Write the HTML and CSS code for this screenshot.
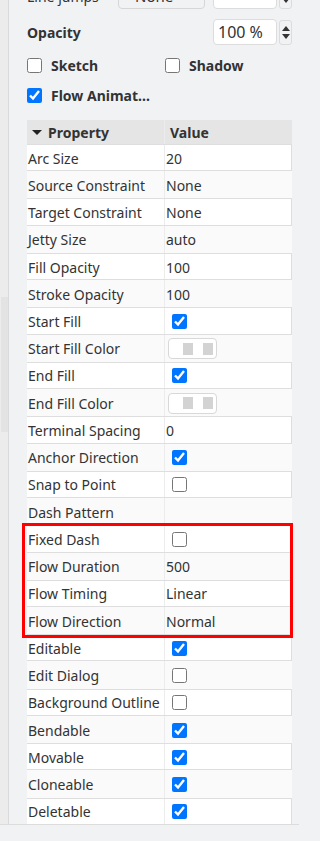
FILE: index.html
```html
<!DOCTYPE html>
<html>
<head>
<meta charset="utf-8">
<link rel="stylesheet" href="styles.css">
</head>
<body>
<div class="app">
  <div class="main">
    <div class="rail"><div class="rail-thumb"></div></div>
    <div class="panel">
      <div class="field jumps">
        <span class="field-label thin">Line jumps</span>
        <div class="select">None</div>
        <div class="num-wrap">
          <div class="num"></div>
          <div class="spin"><span class="up"></span><span class="down"></span></div>
        </div>
      </div>
      <div class="field opacity">
        <span class="field-label">Opacity</span>
        <div class="num-wrap">
          <div class="num">100 %</div>
          <div class="spin"><span class="up"></span><span class="down"></span></div>
        </div>
      </div>
      <div class="checks">
        <label class="check first"><input type="checkbox"><span>Sketch</span></label>
        <label class="check"><input type="checkbox"><span>Shadow</span></label>
      </div>
      <div class="checks second">
        <label class="check"><input type="checkbox" checked><span>Flow Animat...</span></label>
      </div>

      <div class="table">
        <div class="thead">
          <div class="c1"><span class="tri"></span>Property</div>
          <div class="c2">Value</div>
        </div>
        <div class="tr"><div class="c1">Arc Size</div><div class="c2">20</div></div>
        <div class="tr alt"><div class="c1">Source Constraint</div><div class="c2">None</div></div>
        <div class="tr"><div class="c1">Target Constraint</div><div class="c2">None</div></div>
        <div class="tr alt"><div class="c1">Jetty Size</div><div class="c2">auto</div></div>
        <div class="tr"><div class="c1">Fill Opacity</div><div class="c2">100</div></div>
        <div class="tr alt"><div class="c1">Stroke Opacity</div><div class="c2">100</div></div>
        <div class="tr"><div class="c1">Start Fill</div><div class="c2"><input type="checkbox" checked></div></div>
        <div class="tr alt"><div class="c1">Start Fill Color</div><div class="c2"><div class="color"><span class="swatch"></span></div></div></div>
        <div class="tr"><div class="c1">End Fill</div><div class="c2"><input type="checkbox" checked></div></div>
        <div class="tr alt"><div class="c1">End Fill Color</div><div class="c2"><div class="color"><span class="swatch"></span></div></div></div>
        <div class="tr"><div class="c1">Terminal Spacing</div><div class="c2">0</div></div>
        <div class="tr alt"><div class="c1">Anchor Direction</div><div class="c2"><input type="checkbox" checked></div></div>
        <div class="tr"><div class="c1">Snap to Point</div><div class="c2"><input type="checkbox"></div></div>
        <div class="tr alt"><div class="c1">Dash Pattern</div><div class="c2"></div></div>
        <div class="group">
          <div class="tr"><div class="c1">Fixed Dash</div><div class="c2"><input type="checkbox"></div></div>
          <div class="tr alt"><div class="c1">Flow Duration</div><div class="c2">500</div></div>
          <div class="tr"><div class="c1">Flow Timing</div><div class="c2">Linear</div></div>
          <div class="tr alt"><div class="c1">Flow Direction</div><div class="c2">Normal</div></div>
        </div>
        <div class="tr"><div class="c1">Editable</div><div class="c2"><input type="checkbox" checked></div></div>
        <div class="tr alt"><div class="c1">Edit Dialog</div><div class="c2"><input type="checkbox"></div></div>
        <div class="tr"><div class="c1">Background Outline</div><div class="c2"><input type="checkbox"></div></div>
        <div class="tr alt"><div class="c1">Bendable</div><div class="c2"><input type="checkbox" checked></div></div>
        <div class="tr"><div class="c1">Movable</div><div class="c2"><input type="checkbox" checked></div></div>
        <div class="tr alt"><div class="c1">Cloneable</div><div class="c2"><input type="checkbox" checked></div></div>
        <div class="tr"><div class="c1">Deletable</div><div class="c2"><input type="checkbox" checked></div></div>
      </div>
    </div>
  </div>
  <div class="footer"></div>
</div>
</body>
</html>
```

FILE: styles.css
```css
html, body {
  margin: 0;
  padding: 0;
  overflow: hidden;
}
html {
  background: #f1f2f4;
}
body {
  background: #f1f2f4;
  font-family: "Noto Sans", "Liberation Sans", sans-serif;
  color: #333;
  width: 299px;
  height: 841px;
}
.app {
  display: flex;
  flex-direction: column;
  width: 299px;
  height: 841px;
  overflow: hidden;
}
.main {
  display: flex;
  width: 299px;
  height: 825px;
  border-bottom: 1px solid #dcdcdc;
  box-sizing: border-box;
  overflow: hidden;
}
.rail {
  width: 9px;
  flex: none;
  box-sizing: border-box;
  background: #ececec;
  border-right: 1px solid #dadada;
}
.rail-thumb {
  margin-top: 297px;
  margin-left: 1px;
  height: 135px;
  background: #e3e3e3;
}
.panel {
  flex: 1;
  min-width: 0;
  padding: 0 7px 0 18px;
  margin-top: -17px;
  background: #f1f2f4;
}
.field {
  display: flex;
  align-items: center;
  height: 26px;
}
.field.opacity {
  margin-top: 10px;
}
.field-label {
  font-weight: bold;
  font-size: 14px;
  flex: 1;
}
.field-label.thin {
  font-weight: normal;
  flex: none;
  width: 91px;
}
.select {
  width: 87px;
  height: 26px;
  box-sizing: border-box;
  border: 1px solid #d6d6d6;
  border-radius: 4px;
  font-size: 15px;
  padding-left: 16px;
  line-height: 24px;
}
.num-wrap {
  display: flex;
  align-items: center;
  margin-left: auto;
}
.num {
  width: 64px;
  height: 26px;
  box-sizing: border-box;
  background: #fff;
  border: 1px solid #dcdcdc;
  border-radius: 4px;
  font-size: 16px;
  line-height: 24px;
  padding-left: 4px;
}
.spin {
  width: 13px;
  height: 25px;
  margin-left: 2px;
  box-sizing: border-box;
  border: 1px solid #dcdcdc;
  border-radius: 3px;
  display: flex;
  flex-direction: column;
  align-items: center;
  justify-content: space-between;
  padding: 5px 0 5px;
}
.spin .up {
  width: 0;
  height: 0;
  border-left: 4.5px solid transparent;
  border-right: 4.5px solid transparent;
  border-bottom: 5px solid #333;
}
.spin .down {
  width: 0;
  height: 0;
  border-left: 4.5px solid transparent;
  border-right: 4.5px solid transparent;
  border-top: 5px solid #333;
}
.checks {
  display: flex;
  height: 20px;
  margin-top: 10px;
  align-items: center;
}
.check {
  display: flex;
  align-items: center;
  font-weight: bold;
  font-size: 14px;
  white-space: nowrap;
}
.check.first {
  width: 138px;
}
.check input {
  width: 15px;
  height: 15px;
  margin: 0 9px 0 0;
}
.checks.second {
  margin-top: 10px;
}
.table {
  margin-top: 15px;
  width: 265px;
  font-size: 14px;
}
.thead {
  display: grid;
  grid-template-columns: 138px 1fr;
  height: 24px;
  background: #e5e5e5;
  font-weight: bold;
  align-items: center;
}
.thead .c1 {
  display: flex;
  align-items: center;
  padding-left: 5px;
  height: 100%;
  border-right: 1px solid #ececec;
}
.thead .c2 {
  padding-left: 5px;
}
.tri {
  width: 0;
  height: 0;
  border-left: 5px solid transparent;
  border-right: 5px solid transparent;
  border-top: 5px solid #222;
  margin-right: 6px;
}
.tr {
  display: grid;
  grid-template-columns: 138px 1fr;
  height: 27.24px;
  box-sizing: border-box;
  background: #fff;
  border-top: 1px solid #dedede;
  border-bottom: 1px solid #dedede;
  border-right: 1px solid #dedede;
  align-items: center;
}
.tr.alt {
  background: #fafafa;
  border: none;
}
.tr .c1 {
  padding: 1px 0 0 1px;
  box-sizing: border-box;
  height: 100%;
  display: flex;
  align-items: center;
  border-right: 1px solid #ececec;
  white-space: nowrap;
}
.tr .c2 {
  padding: 1px 0 0 1px;
  box-sizing: border-box;
  display: flex;
  align-items: center;
  height: 100%;
}
.tr .c2 input {
  width: 15px;
  height: 15px;
  margin: 0 0 0 6px;
}
.color {
  width: 49px;
  height: 21px;
  box-sizing: border-box;
  border: 1px solid #d8d8d8;
  border-radius: 4px;
  background: #fff;
  margin-left: 2px;
  display: flex;
  align-items: center;
  justify-content: center;
}
.swatch {
  width: 40px;
  height: 12px;
  background: linear-gradient(to right, #fff 0 10px, #d3d3d3 10px 20px, #fff 20px 30px, #d3d3d3 30px 40px);
}
.group {
  position: relative;
}
.group::after {
  content: "";
  position: absolute;
  top: -2px;
  left: -5px;
  right: -1px;
  bottom: -4px;
  border: 3px solid #ff0000;
  pointer-events: none;
}
.footer {
  flex: 1;
  background: #f1f2f4;
}
```
